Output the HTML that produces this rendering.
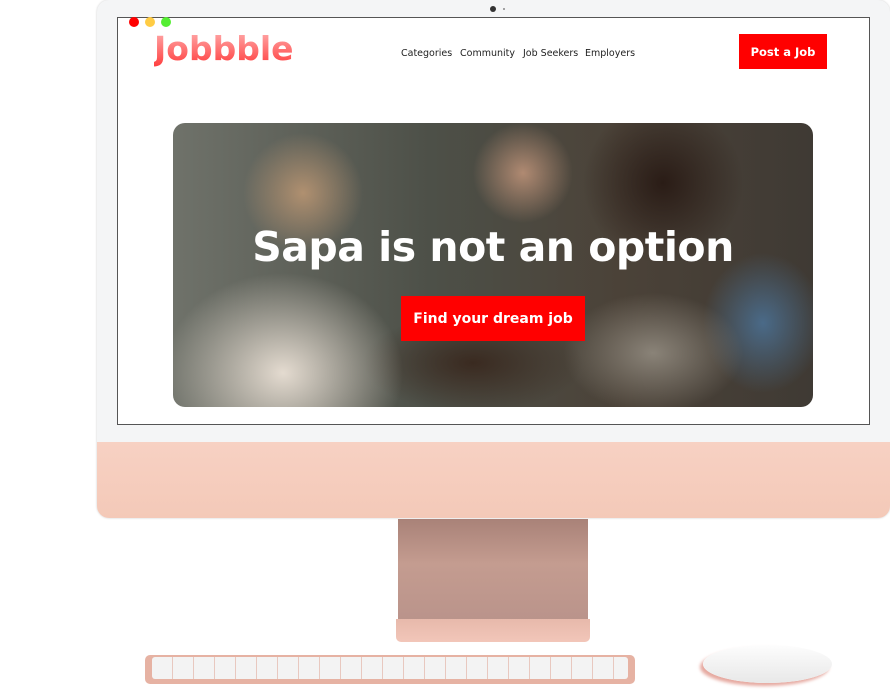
<!DOCTYPE html>
<html><head><style>
*{margin:0;padding:0;box-sizing:border-box}
body{width:890px;height:690px;background:#fff;position:relative;overflow:hidden;font-family:"Liberation Sans",sans-serif}
.mon{position:absolute;left:97px;top:0;width:793px;height:518px;border-radius:12px;background:#f4f5f6;overflow:hidden;box-shadow:0 0 2px rgba(0,0,0,.2)}
.chin{position:absolute;left:0;top:442px;width:100%;height:76px;background:linear-gradient(#f7d1c3,#f4c9b8)}
.screen{position:absolute;left:117px;top:17px;width:753px;height:408px;background:#fff;border:1px solid #555}
.dot{position:absolute;top:17px;width:10px;height:10px;border-radius:50%}
.logo{position:absolute;left:154px;top:29px;font-family:"DejaVu Sans",sans-serif;font-size:33px;font-weight:bold;background:linear-gradient(#ffb0b0,#ff3a3a);-webkit-background-clip:text;color:transparent}
.nav{position:absolute;top:48px;color:#222;font-family:"DejaVu Sans",sans-serif;font-size:9.5px}
.btn{position:absolute;background:#f00;color:#fff;font-weight:bold;display:flex;align-items:center;justify-content:center;font-family:"DejaVu Sans",sans-serif}
.hero{position:absolute;left:173px;top:123px;width:640px;height:284px;border-radius:12px;overflow:hidden;
background:radial-gradient(ellipse 120px 100px at 110px 250px,#e4dbd0 0,transparent 100%),
radial-gradient(ellipse 60px 60px at 130px 70px,#b09070 0,transparent 100%),
radial-gradient(ellipse 50px 50px at 350px 50px,#b08a72 0,transparent 100%),
radial-gradient(ellipse 80px 80px at 490px 60px,#2a1c16 0,transparent 100%),
radial-gradient(ellipse 110px 50px at 300px 240px,#3a2a20 0,transparent 100%),
radial-gradient(ellipse 90px 60px at 480px 230px,#8a8378 0,transparent 100%),
radial-gradient(ellipse 60px 70px at 590px 200px,#4a6a88 0,transparent 100%),
linear-gradient(90deg,#6f726a,#4d5048 40%,#4b4238 70%,#3f3a34)}
.title{position:absolute;left:173px;width:640px;top:223px;text-align:center;color:#fff;font-size:41px;font-weight:bold;font-family:"DejaVu Sans",sans-serif;letter-spacing:-0.5px}
</style></head><body>
<div class="mon"><div class="chin"></div></div>
<div style="position:absolute;left:490px;top:6px;width:6px;height:6px;border-radius:50%;background:#333"></div>
<div style="position:absolute;left:503px;top:8px;width:2px;height:2px;border-radius:50%;background:#888"></div>
<div class="screen"></div>
<div class="dot" style="left:129px;background:#f00"></div>
<div class="dot" style="left:145px;background:#ffcc44"></div>
<div class="dot" style="left:161px;background:#55ee33"></div>
<div class="logo">Jobbble</div>
<div class="nav" style="left:401px">Categories</div>
<div class="nav" style="left:460px">Community</div>
<div class="nav" style="left:523px">Job Seekers</div>
<div class="nav" style="left:585px">Employers</div>
<div class="btn" style="left:739px;top:34px;width:88px;height:35px;font-size:11.5px">Post a Job</div>
<div class="hero"></div>
<div class="title">Sapa is not an option</div>
<div class="btn" style="left:401px;top:296px;width:184px;height:45px;font-size:14px">Find your dream job</div>
<div style="position:absolute;left:398px;top:519px;width:190px;height:112px;background:linear-gradient(#a98278,#c49c90 40%,#b8928a)"></div>
<div style="position:absolute;left:396px;top:619px;width:194px;height:23px;border-radius:0 0 5px 5px;background:linear-gradient(#e7b9ab,#f2c6b9)"></div>
<div style="position:absolute;left:145px;top:655px;width:490px;height:29px;border-radius:5px;background:#e6b2a3"></div>
<div style="position:absolute;left:152px;top:657px;width:476px;height:22px;border-radius:3px;background:repeating-linear-gradient(90deg,#f3f3f3 0 20px,#e8c8bf 20px 21px)"></div>
<div style="position:absolute;left:703px;top:645px;width:129px;height:38px;border-radius:50%;background:linear-gradient(#fdfdfd,#e8e8e8);box-shadow:-3px 3px 3px #e6a9a0"></div>
</body></html>
